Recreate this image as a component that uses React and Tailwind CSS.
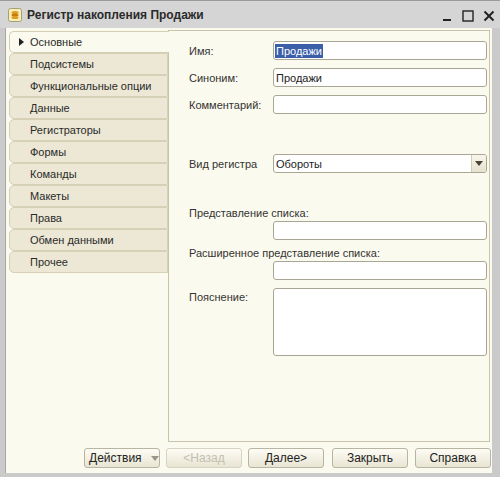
import React from "react";

const tabs = [
  "Основные",
  "Подсистемы",
  "Функциональные опции",
  "Данные",
  "Регистраторы",
  "Формы",
  "Команды",
  "Макеты",
  "Права",
  "Обмен данными",
  "Прочее",
];

function Field({ children, className = "" }) {
  return (
    <div
      className={`h-[19px] bg-white border border-[#aaa694] rounded-[3px] flex items-center px-[1px] ${className}`}
    >
      {children}
    </div>
  );
}

function Btn({ children, disabled, className = "" }) {
  return (
    <div
      className={`h-[20px] w-[76px] flex items-center justify-center rounded-[3px] border text-[12px] bg-gradient-to-b from-[#fdfcf5] to-[#e9e5d3] ${
        disabled ? "text-[#c2bfb0] border-[#d6d3c4]" : "text-[#222] border-[#b9b5a3]"
      } ${className}`}
    >
      {children}
    </div>
  );
}

export default function App() {
  return (
    <div
      className="w-[500px] h-[477px] bg-[#cacaca] flex flex-col text-[11px] leading-[14px] text-[#2a2a2a] overflow-hidden"
      style={{ fontFamily: '"Liberation Sans", Arial, sans-serif' }}
    >
      {/* title bar */}
      <div className="h-[28px] flex items-center pl-[8px] pr-[5px] bg-[#d5d5d5] border-t border-[#9a9a9a]">
        <svg width="14" height="14" viewBox="0 0 14 14">
          <rect x="0.5" y="0.5" width="13" height="13" rx="2" fill="#f4eebd" stroke="#a89f6a" />
          <ellipse cx="7" cy="4.5" rx="3.5" ry="1.5" fill="#e09a1c" />
          <ellipse cx="7" cy="7" rx="3.5" ry="1.5" fill="#c77a0e" />
          <ellipse cx="7" cy="9.5" rx="3.5" ry="1.5" fill="#e09a1c" />
        </svg>
        <span className="ml-[5px] font-bold text-[12px] text-[#2b2b2b]">
          Регистр накопления Продажи
        </span>
        <div className="ml-auto flex items-center gap-[9px] mt-[2px]">
          <svg width="11" height="12" viewBox="0 0 11 12">
            <rect x="1" y="9" width="8" height="2" fill="#222" />
          </svg>
          <svg width="12" height="12" viewBox="0 0 12 12">
            <rect x="1" y="1" width="10" height="10" fill="none" stroke="#222" strokeWidth="1.4" />
          </svg>
          <svg width="12" height="12" viewBox="0 0 12 12">
            <path d="M1.5 1.5 L10.5 10.5 M10.5 1.5 L1.5 10.5" stroke="#222" strokeWidth="2" />
          </svg>
        </div>
      </div>

      {/* window body */}
      <div className="flex-1 ml-[5px] mr-[8px] mb-[4px] bg-[#fbfaee] border-l border-[#a7a7a7] flex flex-col">
        <div className="flex flex-1 pt-[2px]">
          {/* tabs */}
          <div className="w-[162px] pl-[3px] pt-[1px] flex flex-col">
            {tabs.map((t, i) => (
              <div
                key={t}
                className={`h-[22px] flex items-center rounded-l-[5px] border-l border-t border-b ${
                  i === 0
                    ? "bg-[#fbfaee] border-[#d3cdb2] border-r-0 relative z-10 mr-[-1px]"
                    : "bg-[#ece8d5] border-[#d6d0b6] border-r border-r-[#d6d0b6]"
                }`}
              >
                {i === 0 ? (
                  <svg width="12" height="10" viewBox="0 0 12 10" className="ml-[7px]">
                    <path d="M2 1 L7 5 L2 9 Z" fill="#222" />
                  </svg>
                ) : (
                  <span className="w-[19px]" />
                )}
                <span className="ml-[1px]">{t}</span>
              </div>
            ))}
          </div>

          {/* main panel */}
          <div className="flex-1 mr-[2px] border border-[#c9c4ab] bg-[#fbfaee] pl-[20px] pr-[2px] pt-[10px] text-[#333]">
            <div className="flex items-center">
              <span className="w-[84px]">Имя:</span>
              <Field className="flex-1">
                <span className="bg-[#3a5ea8] text-white px-[1px] leading-[14px]">Продажи</span>
              </Field>
            </div>
            <div className="flex items-center mt-[8px]">
              <span className="w-[84px]">Синоним:</span>
              <Field className="flex-1">
                <span className="px-[1px] text-[#222]">Продажи</span>
              </Field>
            </div>
            <div className="flex items-center mt-[8px]">
              <span className="w-[84px]">Комментарий:</span>
              <Field className="flex-1" />
            </div>
            <div className="flex items-center mt-[40px]">
              <span className="w-[84px]">Вид регистра</span>
              <Field className="flex-1 pr-0">
                <span className="px-[1px] text-[#222] flex-1">Обороты</span>
                <div className="w-[15px] h-full border-l border-[#d0ccba] bg-gradient-to-b from-[#f8f6ec] to-[#e6e2cf] flex items-center justify-center rounded-r-[2px]">
                  <svg width="8" height="5" viewBox="0 0 8 5">
                    <path d="M0 0 L8 0 L4 5 Z" fill="#4a4434" />
                  </svg>
                </div>
              </Field>
            </div>
            <div className="mt-[33px]">Представление списка:</div>
            <div className="flex mt-[1px]">
              <span className="w-[84px]" />
              <Field className="flex-1" />
            </div>
            <div className="mt-[6px]">Расширенное представление списка:</div>
            <div className="flex mt-[1px]">
              <span className="w-[84px]" />
              <Field className="flex-1" />
            </div>
            <div className="flex mt-[8px]">
              <span className="w-[84px] pt-[2px]">Пояснение:</span>
              <div className="flex-1 h-[68px] bg-white border border-[#aaa694] rounded-[3px]" />
            </div>
          </div>
        </div>

        {/* buttons */}
        <div className="h-[31px] flex items-center pl-[78px] pt-[1px]">
          <div className="h-[20px] w-[76px] flex items-center rounded-[3px] border border-[#b9b5a3] bg-gradient-to-b from-[#fdfcf5] to-[#e9e5d3] text-[#222] pl-[4px]">
            <span className="text-[12px]">Действия</span>
            <svg width="8" height="5" viewBox="0 0 8 5" className="ml-[9px]">
              <path d="M0 0 L8 0 L4 5 Z" fill="#9a9688" />
            </svg>
          </div>
          <Btn disabled className="ml-[6px]">&lt;Назад</Btn>
          <Btn className="ml-[6px] w-[75px]">Далее&gt;</Btn>
          <Btn className="ml-[8px] w-[75px]">Закрыть</Btn>
          <Btn className="ml-[7px] w-[75px]">Справка</Btn>
        </div>
      </div>
    </div>
  );
}
